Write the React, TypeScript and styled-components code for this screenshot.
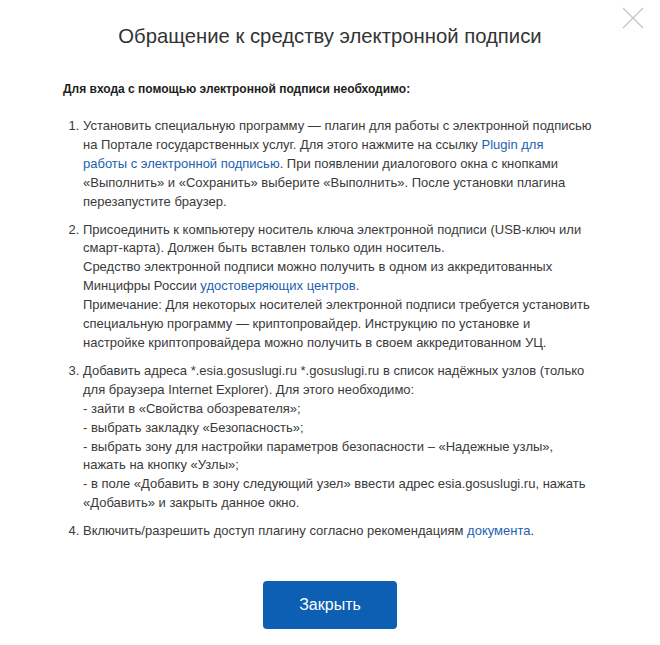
import { FC } from "react"
import styled, { createGlobalStyle } from "styled-components"

const GlobalStyle = createGlobalStyle`
  html, body {
    margin: 0;
    padding: 0;
    background: #fff;
  }
  body {
    font-family: "Liberation Sans", Arial, sans-serif;
    color: #333;
  }
`

const Modal = styled.div`
  position: relative;
  width: 660px;
  height: 645px;
  box-sizing: border-box;
  padding: 24px 20px 0 63px;
  background: #fff;
`

const CloseButton = styled.button`
  position: absolute;
  top: 7px;
  right: 16px;
  width: 22px;
  height: 22px;
  padding: 0;
  border: 0;
  background: transparent;
  cursor: pointer;
`

const Title = styled.h2`
  margin: 0 0 0 -63px;
  width: 660px;
  text-align: center;
  font-size: 20.3px;
  line-height: 24px;
  font-weight: 400;
  color: #333;
`

const Lead = styled.div`
  margin-top: 32px;
  font-size: 12px;
  line-height: 19px;
  font-weight: 700;
  color: #222;
`

const Steps = styled.ol`
  margin: 18px 0 0;
  padding-left: 20px;
  font-size: 13px;
  line-height: 18.9px;
  color: #3a3a3a;
`

const Step = styled.li`
  margin-bottom: 9px;
  white-space: nowrap;
  &:last-child {
    margin-bottom: 0;
  }
`

const Link = styled.a`
  color: #1d5fb0;
  text-decoration: none;
`

const Footer = styled.div`
  display: flex;
  justify-content: center;
  margin: 40px 0 0 -63px;
  width: 660px;
`

const Button = styled.button`
  width: 134px;
  height: 48px;
  border: 0;
  border-radius: 4px;
  background: #0d5fb3;
  color: #fff;
  font-family: "Liberation Sans", Arial, sans-serif;
  font-size: 16px;
  cursor: pointer;
`

const App: FC = () => {
  return (
    <>
      <GlobalStyle />
      <Modal>
        <CloseButton aria-label="Закрыть">
          <svg width="22" height="22" viewBox="0 0 22 22">
            <path d="M1 1 L21 21 M21 1 L1 21" stroke="#c4c4c4" strokeWidth="1.2" fill="none" />
          </svg>
        </CloseButton>
        <Title>Обращение к средству электронной подписи</Title>
        <Lead>Для входа с помощью электронной подписи необходимо:</Lead>
        <Steps>
          <Step>
            Установить специальную программу — плагин для работы с электронной подписью
            <br />
            на Портале государственных услуг. Для этого нажмите на ссылку <Link href="#">Plugin для</Link>
            <br />
            <Link href="#">работы с электронной подписью</Link>. При появлении диалогового окна с кнопками
            <br />
            «Выполнить» и «Сохранить» выберите «Выполнить». После установки плагина
            <br />
            перезапустите браузер.
          </Step>
          <Step>
            Присоединить к компьютеру носитель ключа электронной подписи (USB-ключ или
            <br />
            смарт-карта). Должен быть вставлен только один носитель.
            <br />
            Средство электронной подписи можно получить в одном из аккредитованных
            <br />
            Минцифры России <Link href="#">удостоверяющих центров</Link>.
            <br />
            Примечание: Для некоторых носителей электронной подписи требуется установить
            <br />
            специальную программу — криптопровайдер. Инструкцию по установке и
            <br />
            настройке криптопровайдера можно получить в своем аккредитованном УЦ.
          </Step>
          <Step>
            Добавить адреса *.esia.gosuslugi.ru *.gosuslugi.ru в список надёжных узлов (только
            <br />
            для браузера Internet Explorer). Для этого необходимо:
            <br />
            - зайти в «Свойства обозревателя»;
            <br />
            - выбрать закладку «Безопасность»;
            <br />
            - выбрать зону для настройки параметров безопасности – «Надежные узлы»,
            <br />
            нажать на кнопку «Узлы»;
            <br />
            - в поле «Добавить в зону следующий узел» ввести адрес esia.gosuslugi.ru, нажать
            <br />
            «Добавить» и закрыть данное окно.
          </Step>
          <Step>
            Включить/разрешить доступ плагину согласно рекомендациям <Link href="#">документа</Link>.
          </Step>
        </Steps>
        <Footer>
          <Button>Закрыть</Button>
        </Footer>
      </Modal>
    </>
  )
}

export default App
